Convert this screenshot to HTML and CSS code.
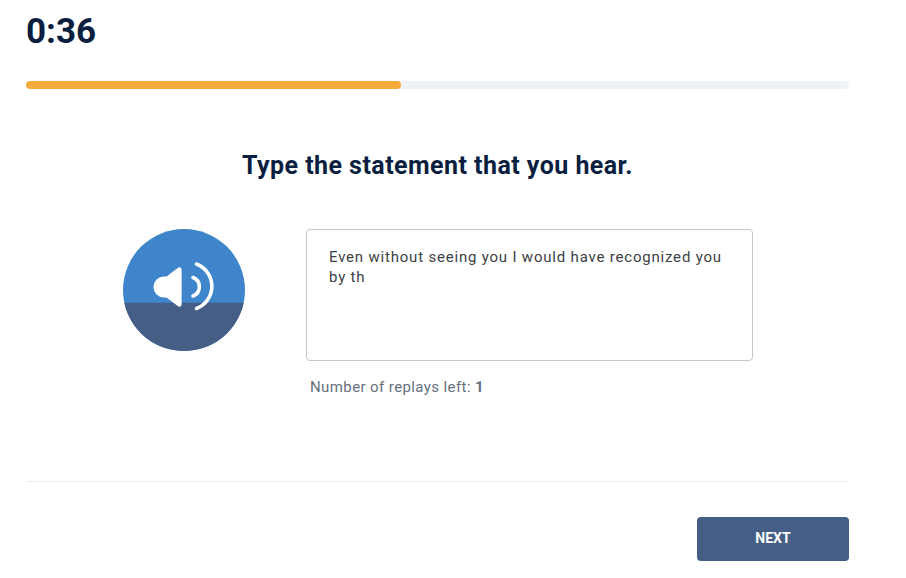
FILE: index.html
```html
<!DOCTYPE html>
<html lang="en">
<head>
    <meta charset="UTF-8">
    <meta name="viewport" content="width=device-width, initial-scale=1.0">
    <title>Dictation Question</title>
    <link rel="stylesheet" href="styles.css">
</head>
<body>
    <div class="quiz-container">
        <!-- Timer -->
        <div class="timer">0:36</div>
        <div class="progress-track">
            <div class="progress-fill"></div>
        </div>
        <h1 class="question-title">Type the statement that you hear.</h1>
        <!-- Audio + Answer -->
        <div class="question-body">
            <button class="audio-btn" aria-label="Play audio">
                <svg width="122" height="122" viewBox="0 0 122 122">
                    <circle cx="61" cy="61" r="61" fill="#3f85cc"/>
                    <path d="M1.34 73.7H120.66A61 61 0 0 1 1.34 73.7Z" fill="#445e85"/>
                    <path d="M58.6 40.5a2.2 2.2 0 0 0-3.5-1.8L43.5 47.5H41a10.5 10.5 0 0 0 0 21h2.5l11.6 8.8a2.2 2.2 0 0 0 3.5-1.8Z" fill="#fff"/>
                    <path d="M70 48.5A9.9 9.9 0 0 1 70 67" fill="none" stroke="#fff" stroke-width="3.6" stroke-linecap="round"/>
                    <path d="M73.500 35A23.800 23.800 0 0 1 73.500 79.500" fill="none" stroke="#fff" stroke-width="3.6" stroke-linecap="round"/>
                </svg>
            </button>
            <div class="answer-section">
                <textarea class="answer-input" readonly>Even without seeing you I would have recognized you by th</textarea>
                <div class="replays">Number of replays left: <b>1</b></div>
            </div>
        </div>
        <!-- Footer -->
        <div class="quiz-footer">
            <button class="next-btn">NEXT</button>
        </div>
    </div>
</body>
</html>
```

FILE: styles.css
```css
/* Global Styling */
body {
    margin: 0;
    background-color: #ffffff;
    font-family: "Roboto", "Noto Sans", sans-serif;
}
.quiz-container {
    width: 823px;
    margin-left: 26px;
}
/* Timer */
.timer {
    height: 81px;
    padding-top: 10px;
    box-sizing: border-box;
    color: #0a1f3f;
    font-size: 35px;
    line-height: 44px;
    font-weight: 700;
}
.progress-track {
    height: 8px;
    border-radius: 4px;
    background-color: #f0f3f6;
}
.progress-fill {
    width: 375px;
    height: 100%;
    border-radius: 4px;
    background-color: #f4ab3c;
}
/* Question */
.question-title {
    margin: 61px 0 47px;
    text-align: center;
    color: #0a1f3f;
    font-size: 25px;
    line-height: 32px;
    font-weight: 700;
    letter-spacing: 0.45px;
}
.question-body {
    display: flex;
    align-items: flex-start;
    gap: 61px;
    padding-left: 97px;
}
.audio-btn {
    width: 122px;
    height: 122px;
    padding: 0;
    border: none;
    background: none;
    cursor: pointer;
}
.audio-btn svg {
    display: block;
}
/* Answer */
.answer-input {
    display: block;
    width: 447px;
    height: 132px;
    box-sizing: border-box;
    padding: 17px 22px;
    border: 1px solid #c4c7cb;
    border-radius: 4px;
    outline: none;
    resize: none;
    color: #3d3f44;
    font-family: inherit;
    font-size: 15px;
    line-height: 20px;
    letter-spacing: 0.8px;
}
.replays {
    margin-top: 17px;
    padding-left: 4px;
    color: #66707c;
    font-size: 15px;
    line-height: 18px;
    letter-spacing: 0.4px;
}
/* Footer */
.quiz-footer {
    display: flex;
    justify-content: flex-end;
    margin-top: 85px;
    padding-top: 35px;
    border-top: 1px solid #ececec;
}
.next-btn {
    width: 152px;
    height: 44px;
    padding: 0 0 2px;
    border: none;
    border-radius: 4px;
    background-color: #445e85;
    color: #ffffff;
    cursor: pointer;
    font-family: inherit;
    font-size: 14px;
    font-weight: 700;
}
```
